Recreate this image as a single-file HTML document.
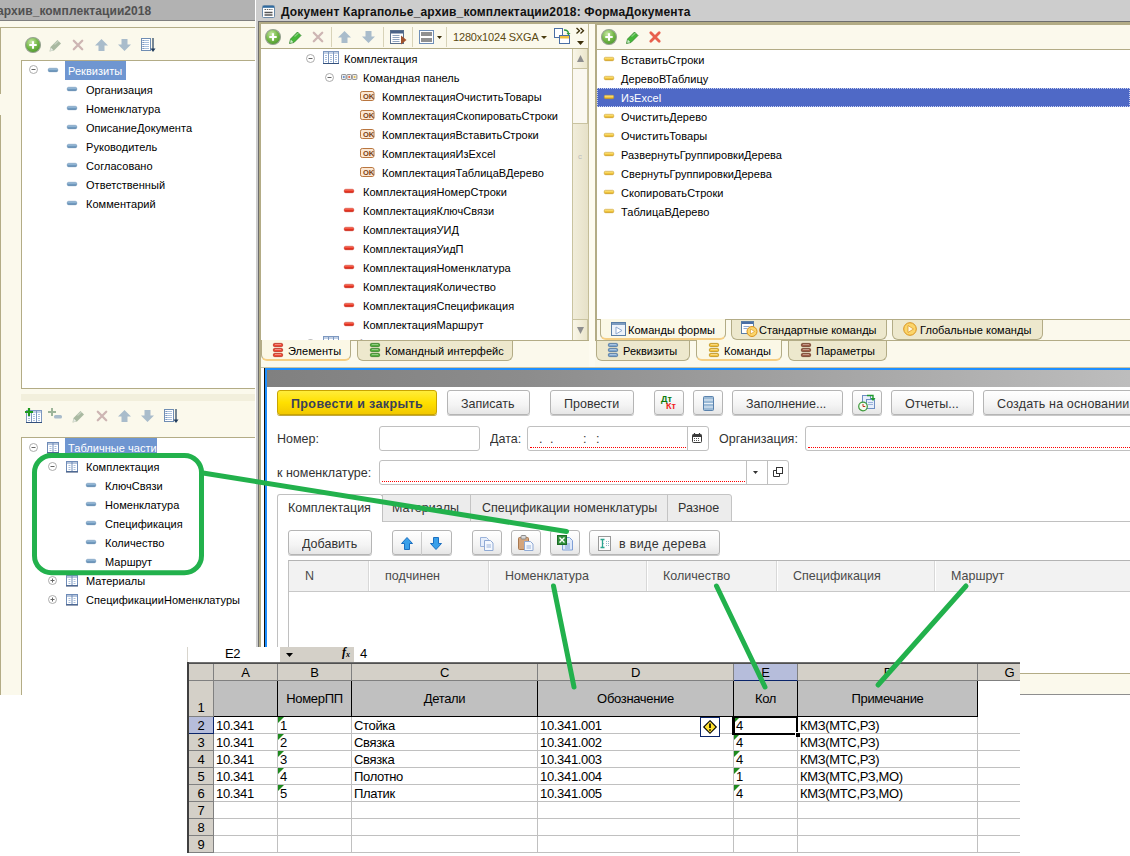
<!DOCTYPE html>
<html lang="ru"><head><meta charset="utf-8"><title>Документ Каргаполье_архив_комплектации2018: ФормаДокумента</title>
<style>
html,body{margin:0;padding:0;background:#fff}
body{width:1130px;height:856px;position:relative;overflow:hidden;font-family:"Liberation Sans",sans-serif;font-size:11px;color:#000}
.a{position:absolute}
.t{position:absolute;white-space:nowrap;line-height:13px;height:13px;font-size:11px;letter-spacing:.04px;margin-top:1px}
.f{position:absolute;white-space:nowrap;line-height:15px;height:15px;font-size:13.3px;color:#333;letter-spacing:0;transform:scaleX(.94);transform-origin:0 0}
.x{position:absolute;white-space:nowrap;line-height:15px;height:15px;font-size:13px;color:#000;letter-spacing:-.33px}
.btn{position:absolute;box-sizing:border-box;border:1px solid #b5b5b5;border-radius:3px;background:linear-gradient(#fff,#f4f4f4 60%,#e6e6e6);box-shadow:0 1px 0 #c9c9c9}
.inp{position:absolute;box-sizing:border-box;border:1px solid #c0c0c0;border-radius:3px;background:#fff}
svg{position:absolute;overflow:visible}
</style></head><body>
<svg width="0" height="0" style="position:absolute"><defs>
<radialGradient id="gp" cx="40%" cy="30%" r="75%"><stop offset="0" stop-color="#c8e8a4"/><stop offset=".55" stop-color="#74b848"/><stop offset="1" stop-color="#4a962c"/></radialGradient>
<linearGradient id="gb" x1="0" y1="0" x2="0" y2="1"><stop offset="0" stop-color="#b9d3e8"/><stop offset=".5" stop-color="#7ea6c9"/><stop offset="1" stop-color="#4d7ba3"/></linearGradient>
<linearGradient id="gr" x1="0" y1="0" x2="0" y2="1"><stop offset="0" stop-color="#ff9a8a"/><stop offset=".5" stop-color="#ef3a26"/><stop offset="1" stop-color="#c81e10"/></linearGradient>
<linearGradient id="gy" x1="0" y1="0" x2="0" y2="1"><stop offset="0" stop-color="#fff0a8"/><stop offset=".5" stop-color="#f7cf48"/><stop offset="1" stop-color="#d9a520"/></linearGradient>
<g id="plus"><circle cx="8" cy="8" r="7.500" fill="url(#gp)" stroke="#98a392" stroke-width="1.100"/><path d="M8 4.300v7.400M4.300 8h7.400" stroke="#fff" stroke-width="2.100" fill="none"/></g>
<g id="exm"><circle cx="4.500" cy="4.500" r="4" fill="#fff" stroke="#a3a3a3" stroke-width=".9"/><path d="M2.500 4.500h4" stroke="#666" stroke-width="1"/></g>
<g id="exp"><circle cx="4.500" cy="4.500" r="4" fill="#fff" stroke="#a3a3a3" stroke-width=".9"/><path d="M2.500 4.500h4M4.500 2.500v4" stroke="#666" stroke-width="1"/></g>
<g id="db"><rect x=".3" y=".3" width="9.400" height="3.400" rx="1.300" fill="url(#gb)" stroke="#5f8ab2" stroke-width=".6"/></g>
<g id="dr"><rect x=".3" y=".3" width="9.400" height="3.400" rx="1.300" fill="url(#gr)" stroke="#cf2a18" stroke-width=".6"/></g>
<g id="dy"><rect x=".3" y=".3" width="9.400" height="3.400" rx="1.100" fill="url(#gy)" stroke="#c9981e" stroke-width=".6"/></g>
<g id="pen"><path d="M.5 12.500L1.500 8 8.500 1 12 4.500 5 11.500z"/><path d="M1.700 8.600L4.400 11.300 1.200 11.900z" fill="#fff" fill-opacity=".75" stroke="none"/><path d="M5.500 5.500L9.500 2" stroke="#fff" stroke-opacity=".35" stroke-width="1.200" fill="none"/></g>
<g id="xx"><path d="M1.800 1.800l8.400 8.400M10.200 1.800l-8.400 8.400" stroke-linecap="round" fill="none"/></g>
<g id="up"><path d="M6.500 0L13 6.500H9.500V12h-6V6.500H0z"/></g>
<g id="dn"><path d="M6.500 12L13 5.500H9.500V0h-6v5.500H0z"/></g>
<g id="lst"><rect x=".5" y=".5" width="9" height="12" fill="#fff" stroke="#6f8db3"/><path d="M2 2.500h6M2 4.500h6M2 6.500h6M2 8.500h6M2 10.500h6" stroke="#a9c0dc" stroke-width="1"/><path d="M1.500 2.500h1M1.500 4.500h1M1.500 6.500h1M1.500 8.500h1M1.500 10.500h1" stroke="#4a6fa5" stroke-width="1"/><path d="M12 0v12" stroke="#1f3b5c" stroke-width="1.2"/><path d="M9.500 10.500h5L12 14z" fill="#1f3b5c"/></g>
<g id="tbl"><rect x=".5" y=".5" width="11" height="10" fill="#fff" stroke="#6f8cb8"/><rect x="1" y="1" width="10" height="2" fill="#b4c4dc"/><path d="M6 1v10" stroke="#6f8cb8"/><path d="M2.500 4.500h2M2.500 6.500h2M2.500 8.500h2M7.500 4.500h2M7.500 6.500h2M7.500 8.500h2" stroke="#a9bfdc"/><path d="M0 11h12" stroke="#2f4670"/></g>
<g id="tbl3"><rect x=".5" y=".5" width="15" height="12" fill="#fff" stroke="#7d98c0"/><rect x="1" y="1" width="14" height="2" fill="#c3d1e6"/><path d="M5.500 1v11M10.500 1v11" stroke="#7d98c0"/><path d="M2 4.500h2M2 6.500h2M2 8.500h2M2 10.500h2M7 4.500h2M7 6.500h2M7 8.500h2M7 10.500h2M12 4.500h2M12 6.500h2M12 8.500h2M12 10.500h2" stroke="#a9bfdc"/><path d="M0 12.500h16" stroke="#33507c"/></g>
<g id="okb"><rect x=".5" y=".5" width="13.500" height="9" rx="1.800" fill="#fbe7d3" stroke="#b9763f"/></g>
<g id="stack"><rect x="0" y="0" width="10" height="3.400" rx="1"/><rect x="0" y="4.300" width="10" height="3.400" rx="1"/><rect x="0" y="8.600" width="10" height="3.400" rx="1"/></g>
</defs></svg>

<div class="a" style="left:0;top:0;width:1130px;height:695px;overflow:hidden;background:#fbf9ec">
<div class="a" style="left:0;top:0;width:255px;height:20px;background:#b2b2b2"></div>
<div class="a" style="left:0;top:20px;width:255px;height:1px;background:#7f7f7f"></div>
<div class="a" style="left:-3px;top:3px;font-weight:bold;font-size:12px;line-height:16px;color:#505050;white-space:nowrap;letter-spacing:.08px">архив_комплектации2018</div>
<div class="a" style="left:0;top:27px;width:255px;height:1px;background:#b3ac86"></div>
<div class="a" style="left:0;top:27px;width:1px;height:67px;background:#b3ac86"></div>
<div class="a" style="left:0;top:115px;width:1px;height:580px;background:#b3ac86"></div>
<svg style="left:25px;top:37px" width="16" height="16"><use href="#plus"/></svg>
<svg style="left:49px;top:39px" width="13" height="13" fill="#a9b9a1"><use href="#pen"/></svg>
<svg style="left:72px;top:39px" width="12" height="12" stroke="#cdb5b3" stroke-width="2.300"><use href="#xx"/></svg>
<svg style="left:95px;top:39px" width="13" height="12" fill="#a9bccb"><use href="#up"/></svg>
<svg style="left:118px;top:39px" width="13" height="12" fill="#a9bccb"><use href="#dn"/></svg>
<svg style="left:141px;top:38px" width="15" height="14"><use href="#lst"/></svg>
<div class="a" style="left:21px;top:60px;width:240px;height:329px;background:#fff;border:1px solid #b3ac86;box-sizing:border-box"></div>
<svg style="left:29px;top:65px" width="10" height="10"><use href="#exm"/></svg>
<svg style="left:48px;top:68px" width="10" height="4"><use href="#db"/></svg>
<div class="a" style="left:65px;top:61px;width:61px;height:19px;background:#6f96d1"></div>
<div class="t" style="left:68px;top:64px;color:#fff">Реквизиты</div>
<svg style="left:67px;top:87px" width="10" height="4"><use href="#db"/></svg>
<div class="t" style="left:86px;top:83px">Организация</div>
<svg style="left:67px;top:106px" width="10" height="4"><use href="#db"/></svg>
<div class="t" style="left:86px;top:102px">Номенклатура</div>
<svg style="left:67px;top:125px" width="10" height="4"><use href="#db"/></svg>
<div class="t" style="left:86px;top:121px">ОписаниеДокумента</div>
<svg style="left:67px;top:144px" width="10" height="4"><use href="#db"/></svg>
<div class="t" style="left:86px;top:140px">Руководитель</div>
<svg style="left:67px;top:163px" width="10" height="4"><use href="#db"/></svg>
<div class="t" style="left:86px;top:159px">Согласовано</div>
<svg style="left:67px;top:182px" width="10" height="4"><use href="#db"/></svg>
<div class="t" style="left:86px;top:178px">Ответственный</div>
<svg style="left:67px;top:201px" width="10" height="4"><use href="#db"/></svg>
<div class="t" style="left:86px;top:197px">Комментарий</div>
<div class="a" style="left:21px;top:394px;width:234px;height:7px;background:#f2efdc"></div>
<svg style="left:26px;top:410px" width="16" height="14"><use href="#tbl3"/></svg>
<svg style="left:25px;top:408px" width="8" height="8"><path d="M4 0v8M0 4h8" stroke="#1f9a1f" stroke-width="2.200"/></svg>
<svg style="left:48px;top:408px" width="14" height="12"><path d="M4 0v8M0 4h8" stroke="#9db59a" stroke-width="2"/><rect x="6" y="7" width="8" height="3.500" rx="1.500" fill="#a9bccb"/></svg>
<svg style="left:72px;top:410px" width="13" height="13" fill="#a9b9a1"><use href="#pen"/></svg>
<svg style="left:96px;top:410px" width="12" height="12" stroke="#cdb5b3" stroke-width="2.300"><use href="#xx"/></svg>
<svg style="left:118px;top:410px" width="13" height="12" fill="#a9bccb"><use href="#up"/></svg>
<svg style="left:141px;top:410px" width="13" height="12" fill="#a9bccb"><use href="#dn"/></svg>
<svg style="left:164px;top:409px" width="15" height="14"><use href="#lst"/></svg>
<div class="a" style="left:21px;top:437px;width:240px;height:270px;background:#fff;border:1px solid #b3ac86;box-sizing:border-box"></div>
<svg style="left:29px;top:443px" width="10" height="10"><use href="#exm"/></svg>
<svg style="left:47px;top:442px" width="12" height="12"><use href="#tbl"/></svg>
<div class="a" style="left:65px;top:438px;width:92px;height:19px;background:#6f96d1"></div>
<div class="t" style="left:68px;top:441px;color:#fff">Табличные части</div>
<svg style="left:48px;top:462px" width="10" height="10"><use href="#exm"/></svg>
<svg style="left:66px;top:461px" width="12" height="12"><use href="#tbl"/></svg>
<div class="t" style="left:86px;top:460px">Комплектация</div>
<svg style="left:86px;top:483px" width="10" height="4"><use href="#db"/></svg>
<div class="t" style="left:105px;top:479px">КлючСвязи</div>
<svg style="left:86px;top:502px" width="10" height="4"><use href="#db"/></svg>
<div class="t" style="left:105px;top:498px">Номенклатура</div>
<svg style="left:86px;top:521px" width="10" height="4"><use href="#db"/></svg>
<div class="t" style="left:105px;top:517px">Спецификация</div>
<svg style="left:86px;top:540px" width="10" height="4"><use href="#db"/></svg>
<div class="t" style="left:105px;top:536px">Количество</div>
<svg style="left:86px;top:559px" width="10" height="4"><use href="#db"/></svg>
<div class="t" style="left:105px;top:555px">Маршрут</div>
<svg style="left:48px;top:576px" width="10" height="10"><use href="#exp"/></svg>
<svg style="left:66px;top:575px" width="12" height="12"><use href="#tbl"/></svg>
<div class="t" style="left:86px;top:574px">Материалы</div>
<svg style="left:48px;top:595px" width="10" height="10"><use href="#exp"/></svg>
<svg style="left:66px;top:594px" width="12" height="12"><use href="#tbl"/></svg>
<div class="t" style="left:86px;top:593px">СпецификацииНоменклатуры</div>
<div class="a" style="left:255px;top:0;width:1px;height:695px;background:#fff"></div>
<div class="a" style="left:256px;top:0;width:2px;height:695px;background:#cdcdcd"></div>
<div class="a" style="left:258px;top:0;width:872px;height:695px;background:#fbf9ec"></div>
<div class="a" style="left:256px;top:0;width:874px;height:21px;background:#cdcdcd"></div>
<div class="a" style="left:258px;top:21px;width:872px;height:674px;border-left:1px solid #6e6e6e;border-top:1px solid #6e6e6e;box-sizing:border-box"></div>
<div class="a" style="left:259px;top:22px;width:871px;height:673px;border-left:2px solid #b3ac86;border-top:2px solid #b3ac86;box-sizing:border-box"></div>
<svg style="left:262px;top:5px" width="13" height="13"><rect x=".5" y=".5" width="12" height="12" rx="1" fill="#fff" stroke="#6a8aa8"/><rect x="1" y="1" width="11" height="1.800" fill="#2f6a9f"/><path d="M2.500 4.500h8" stroke="#666" stroke-dasharray="1.500 .8"/><path d="M2.500 7.500h8M2.500 10h8" stroke="#555" stroke-width="1.300"/></svg>
<div class="a" style="left:281px;top:4px;font-weight:bold;font-size:12px;line-height:16px;color:#111;white-space:nowrap;letter-spacing:.16px">Документ Каргаполье_архив_комплектации2018: ФормаДокумента</div>
<div class="a" style="left:588px;top:24px;width:1px;height:317px;background:#c4bd98"></div>
<div class="a" style="left:589px;top:24px;width:6px;height:343px;background:#fdfbf0"></div>
<svg style="left:265px;top:29px" width="16" height="16"><use href="#plus"/></svg>
<svg style="left:289px;top:31px" width="13" height="13" fill="#46b83a" stroke="#2a7a22" stroke-width=".7"><use href="#pen"/></svg>
<svg style="left:312px;top:31px" width="12" height="12" stroke="#cdb5b3" stroke-width="2.300"><use href="#xx"/></svg>
<div class="a" style="left:331px;top:27px;width:1px;height:20px;background:#d8d3b8"></div>
<svg style="left:338px;top:31px" width="13" height="12" fill="#a9bccb"><use href="#up"/></svg>
<svg style="left:362px;top:31px" width="13" height="12" fill="#a9bccb"><use href="#dn"/></svg>
<div class="a" style="left:383px;top:27px;width:1px;height:20px;background:#d8d3b8"></div>
<svg style="left:390px;top:30px" width="17" height="15"><rect x=".5" y=".5" width="13" height="13" fill="#fff" stroke="#5a6f8c"/><rect x="1" y="1" width="12" height="2.500" fill="#4a6288"/><path d="M2.500 5.500h7M2.500 7.500h7M2.500 9.500h7M2.500 11.500h7" stroke="#8fa3bf"/><path d="M11 5.500l5.500 4.500L11 14.500z" fill="#a0522d"/></svg>
<div class="a" style="left:412px;top:27px;width:1px;height:20px;background:#d8d3b8"></div>
<svg style="left:419px;top:30px" width="15" height="14"><rect x=".5" y=".5" width="14" height="13" fill="#fff" stroke="#6f8fb8"/><rect x="2" y="2" width="11" height="4" fill="#909090"/><rect x="2" y="8" width="11" height="4" fill="#909090"/></svg>
<svg style="left:437px;top:36px" width="5" height="3"><path d="M0 0h5L2.500 3z" fill="#3c2f0a"/></svg>
<div class="a" style="left:446px;top:27px;width:1px;height:20px;background:#d8d3b8"></div>
<div class="t" style="left:453px;top:30px;color:#5b4a12;letter-spacing:-.18px">1280x1024 SXGA</div>
<svg style="left:541px;top:36px" width="6" height="3"><path d="M0 0h6L3 3z" fill="#4b3d10"/></svg>
<svg style="left:554px;top:28px" width="17" height="17"><rect x=".5" y=".5" width="8" height="9" fill="#fff" stroke="#4a6fa5"/><rect x="5.500" y="7.500" width="10" height="8" fill="#fff" stroke="#4a6fa5"/><rect x="6" y="8" width="9" height="2.500" fill="#f0c040"/><path d="M10 2c3 0 4.500 1.500 4.500 4" stroke="#2e9a3e" fill="none" stroke-width="1.300"/><path d="M12.500 5h4l-2 2.500z" fill="#2e9a3e"/></svg>
<svg style="left:576px;top:28px" width="9" height="18"><path d="M.5 0l3 2.800-3 2.800M4.500 0l3 2.800-3 2.800" stroke="#3c2f0a" fill="none" stroke-width="1.300"/><path d="M1 13h7l-3.500 4z" fill="#3c2f0a"/></svg>
<div class="a" style="left:261px;top:48px;width:327px;height:1px;background:#b3ac86"></div>
<div class="a" style="left:261px;top:49px;width:1px;height:291px;background:#fff"></div>
<div class="a" style="left:262px;top:49px;width:310px;height:291px;background:#fff;overflow:hidden">
<svg style="left:44px;top:5px" width="10" height="10"><use href="#exm"/></svg>
<svg style="left:61px;top:2px" width="16" height="14"><use href="#tbl3"/></svg>
<div class="t" style="left:82px;top:3px">Комплектация</div>
<svg style="left:63px;top:24px" width="10" height="10"><use href="#exm"/></svg>
<svg style="left:79px;top:25px" width="17" height="6"><g fill="#ececec" stroke="#8a8a8a" stroke-width=".9"><rect x=".5" y=".5" width="4.600" height="5" rx=".8"/><rect x="5.900" y=".5" width="4.600" height="5" rx=".8"/><rect x="11.300" y=".5" width="4.600" height="5" rx=".8"/></g><rect x="2" y="2.200" width="1.600" height="1.600" fill="#4a7fd0"/><rect x="7.400" y="2.200" width="1.600" height="1.600" fill="#e8502a"/><rect x="12.800" y="2.200" width="1.600" height="1.600" fill="#e8b020"/></svg>
<div class="t" style="left:101px;top:22px">Командная панель</div>
<svg style="left:98px;top:42px" width="14" height="11"><use href="#okb"/></svg>
<div class="a" style="left:101px;top:43.6px;font-size:7.500px;font-weight:bold;line-height:8px;color:#7a4216;letter-spacing:-.2px">OK</div>
<div class="t" style="left:120px;top:41px">КомплектацияОчиститьТовары</div>
<svg style="left:98px;top:61px" width="14" height="11"><use href="#okb"/></svg>
<div class="a" style="left:101px;top:62.6px;font-size:7.500px;font-weight:bold;line-height:8px;color:#7a4216;letter-spacing:-.2px">OK</div>
<div class="t" style="left:120px;top:60px">КомплектацияСкопироватьСтроки</div>
<svg style="left:98px;top:80px" width="14" height="11"><use href="#okb"/></svg>
<div class="a" style="left:101px;top:81.6px;font-size:7.500px;font-weight:bold;line-height:8px;color:#7a4216;letter-spacing:-.2px">OK</div>
<div class="t" style="left:120px;top:79px">КомплектацияВставитьСтроки</div>
<svg style="left:98px;top:99px" width="14" height="11"><use href="#okb"/></svg>
<div class="a" style="left:101px;top:100.6px;font-size:7.500px;font-weight:bold;line-height:8px;color:#7a4216;letter-spacing:-.2px">OK</div>
<div class="t" style="left:120px;top:98px">КомплектацияИзExcel</div>
<svg style="left:98px;top:118px" width="14" height="11"><use href="#okb"/></svg>
<div class="a" style="left:101px;top:119.6px;font-size:7.500px;font-weight:bold;line-height:8px;color:#7a4216;letter-spacing:-.2px">OK</div>
<div class="t" style="left:120px;top:117px">КомплектацияТаблицаВДерево</div>
<svg style="left:82px;top:140px" width="10" height="4"><use href="#dr"/></svg>
<div class="t" style="left:101px;top:136px">КомплектацияНомерСтроки</div>
<svg style="left:82px;top:159px" width="10" height="4"><use href="#dr"/></svg>
<div class="t" style="left:101px;top:155px">КомплектацияКлючСвязи</div>
<svg style="left:82px;top:178px" width="10" height="4"><use href="#dr"/></svg>
<div class="t" style="left:101px;top:174px">КомплектацияУИД</div>
<svg style="left:82px;top:197px" width="10" height="4"><use href="#dr"/></svg>
<div class="t" style="left:101px;top:193px">КомплектацияУидП</div>
<svg style="left:82px;top:216px" width="10" height="4"><use href="#dr"/></svg>
<div class="t" style="left:101px;top:212px">КомплектацияНоменклатура</div>
<svg style="left:82px;top:235px" width="10" height="4"><use href="#dr"/></svg>
<div class="t" style="left:101px;top:231px">КомплектацияКоличество</div>
<svg style="left:82px;top:254px" width="10" height="4"><use href="#dr"/></svg>
<div class="t" style="left:101px;top:250px">КомплектацияСпецификация</div>
<svg style="left:82px;top:273px" width="10" height="4"><use href="#dr"/></svg>
<div class="t" style="left:101px;top:269px">КомплектацияМаршрут</div>
<svg style="left:44px;top:290px" width="10" height="10"><use href="#exp"/></svg>
<svg style="left:61px;top:287px" width="16" height="14"><use href="#tbl3"/></svg>
<div class="t" style="left:82px;top:288px">ТаблицаКомплектацииДерево</div>
</div>
<div class="a" style="left:572px;top:49px;width:16px;height:291px;background:linear-gradient(90deg,#f1edda,#e6e1c8);border-left:1px solid #c9c3a0;box-sizing:border-box"></div>
<div class="a" style="left:572px;top:49px;width:16px;height:20px;background:linear-gradient(90deg,#f9f6e8,#ebe6cc);border:1px solid #c9c3a0;border-top:none;box-sizing:border-box"></div>
<svg style="left:577px;top:55px" width="7" height="7"><path d="M0 7h7L3.500 0z" fill="#8e8e8e"/></svg>
<div class="a" style="left:572px;top:69px;width:16px;height:55px;background:#faf8f0;border:1px solid #c9c3a0;border-top:none;box-sizing:border-box"></div>
<div class="a" style="left:572px;top:319px;width:16px;height:21px;background:linear-gradient(90deg,#f9f6e8,#ebe6cc);border:1px solid #c9c3a0;border-bottom:none;box-sizing:border-box"></div>
<svg style="left:577px;top:327px" width="7" height="7"><path d="M0 0h7L3.500 7z" fill="#8e8e8e"/></svg>
<div class="a" style="left:578px;top:153px;font-size:8px;line-height:8px;color:#bbb">c</div>
<div class="a" style="left:261px;top:340px;width:328px;height:1px;background:#b3ac86"></div>
<div class="a" style="left:595px;top:340px;width:535px;height:1px;background:#b3ac86"></div>
<div class="a" style="left:261px;top:340px;width:90px;height:21px;background:#fbf8e6;border:1px solid #b3ac86;border-top:none;border-bottom:2px solid #f5cf85;border-radius:0 0 6px 6px;box-sizing:border-box"></div>
<svg style="left:273px;top:343px" width="10" height="14"><g fill="#ee4a36" stroke="#b82a1a" stroke-width=".8"><rect x=".4" y=".4" width="9.200" height="3.200" rx="1.200"/><rect x=".4" y="5.400" width="9.200" height="3.200" rx="1.200"/><rect x=".4" y="10.400" width="9.200" height="3.200" rx="1.200"/></g><path d="M2 1.500h6M2 6.500h6M2 11.500h6" stroke="#fff" stroke-opacity=".45" stroke-width=".8"/></svg>
<div class="t" style="left:288px;top:344px">Элементы</div>
<div class="a" style="left:357px;top:341px;width:156px;height:20px;background:#ede8cd;border:1px solid #b3ac86;border-top:none;border-bottom:1px solid #b3ac86;border-radius:0 0 6px 6px;box-sizing:border-box"></div>
<svg style="left:370px;top:343px" width="10" height="14"><g fill="#56b040" stroke="#2f7a22" stroke-width=".8"><rect x=".4" y=".4" width="9.200" height="3.200" rx="1.200"/><rect x=".4" y="5.400" width="9.200" height="3.200" rx="1.200"/><rect x=".4" y="10.400" width="9.200" height="3.200" rx="1.200"/></g><path d="M2 1.500h6M2 6.500h6M2 11.500h6" stroke="#fff" stroke-opacity=".45" stroke-width=".8"/></svg>
<div class="t" style="left:385px;top:344px">Командный интерфейс</div>
<div class="a" style="left:595px;top:24px;width:2px;height:317px;background:#b3ac86"></div>
<svg style="left:601px;top:29px" width="16" height="16"><use href="#plus"/></svg>
<svg style="left:626px;top:31px" width="13" height="13" fill="#46b83a" stroke="#2a7a22" stroke-width=".7"><use href="#pen"/></svg>
<svg style="left:649px;top:31px" width="12" height="12" stroke="#e8604e" stroke-width="2.800"><use href="#xx"/></svg>
<div class="a" style="left:595px;top:24px;width:535px;height:1px;background:#b3ac86"></div>
<div class="a" style="left:597px;top:49px;width:533px;height:1px;background:#b3ac86"></div>
<div class="a" style="left:597px;top:50px;width:533px;height:269px;background:#fff"></div>
<div class="a" style="left:597px;top:88px;width:533px;height:19px;background:#4f69c6;outline:1px dotted #c9d2f2;outline-offset:-1px"></div>
<svg style="left:604px;top:57px" width="10" height="4"><use href="#dy"/></svg>
<div class="t" style="left:621px;top:53px">ВставитьСтроки</div>
<svg style="left:604px;top:76px" width="10" height="4"><use href="#dy"/></svg>
<div class="t" style="left:621px;top:72px">ДеревоВТаблицу</div>
<svg style="left:604px;top:95px" width="10" height="4"><use href="#dy"/></svg>
<div class="t" style="left:621px;top:91px;color:#fff">ИзExcel</div>
<svg style="left:604px;top:114px" width="10" height="4"><use href="#dy"/></svg>
<div class="t" style="left:621px;top:110px">ОчиститьДерево</div>
<svg style="left:604px;top:133px" width="10" height="4"><use href="#dy"/></svg>
<div class="t" style="left:621px;top:129px">ОчиститьТовары</div>
<svg style="left:604px;top:152px" width="10" height="4"><use href="#dy"/></svg>
<div class="t" style="left:621px;top:148px">РазвернутьГруппировкиДерева</div>
<svg style="left:604px;top:171px" width="10" height="4"><use href="#dy"/></svg>
<div class="t" style="left:621px;top:167px">СвернутьГруппировкиДерева</div>
<svg style="left:604px;top:190px" width="10" height="4"><use href="#dy"/></svg>
<div class="t" style="left:621px;top:186px">СкопироватьСтроки</div>
<svg style="left:604px;top:209px" width="10" height="4"><use href="#dy"/></svg>
<div class="t" style="left:621px;top:205px">ТаблицаВДерево</div>
<div class="a" style="left:597px;top:319px;width:533px;height:1px;background:#b3ac86"></div>
<div class="a" style="left:600px;top:319px;width:126px;height:21px;background:#fbf8e6;border:1px solid #b3ac86;border-top:none;border-bottom:2px solid #f5cf85;border-radius:0 0 6px 6px;box-sizing:border-box"></div>
<svg style="left:611px;top:322px" width="15" height="14"><rect x=".5" y=".5" width="14" height="13" fill="#eef3fa" stroke="#5a7ea6"/><rect x="1" y="1" width="13" height="2" fill="#7d9cc0"/><path d="M5 5l6 3.500L5 12z" fill="#fff" stroke="#8fa9cf"/></svg>
<div class="t" style="left:628px;top:323px">Команды формы</div>
<div class="a" style="left:731px;top:320px;width:156px;height:20px;background:#ede8cd;border:1px solid #b3ac86;border-top:none;border-bottom:1px solid #b3ac86;border-radius:0 0 6px 6px;box-sizing:border-box"></div>
<svg style="left:741px;top:321px" width="17" height="16"><rect x=".5" y=".5" width="12" height="12" fill="#fff" stroke="#5a7ea6"/><rect x="1" y="1" width="11" height="2" fill="#4a6fa5"/><path d="M2.500 5.500h6M2.500 7.500h4" stroke="#8fa9cf"/><circle cx="11" cy="10.500" r="5" fill="#fbd56a" stroke="#d9921c"/><path d="M9.500 8l4 2.500-4 2.500z" fill="#fff" stroke="#d9921c" stroke-width=".6"/></svg>
<div class="t" style="left:759px;top:323px">Стандартные команды</div>
<div class="a" style="left:892px;top:320px;width:151px;height:20px;background:#ede8cd;border:1px solid #b3ac86;border-top:none;border-bottom:1px solid #b3ac86;border-radius:0 0 6px 6px;box-sizing:border-box"></div>
<svg style="left:903px;top:322px" width="14" height="14"><circle cx="7" cy="7" r="6.300" fill="#fbd56a" stroke="#d9921c"/><path d="M5 3.500l5.500 3.500L5 10.500z" fill="#fff8e0" stroke="#d9921c" stroke-width=".7"/></svg>
<div class="t" style="left:920px;top:323px">Глобальные команды</div>
<div class="a" style="left:596px;top:341px;width:94px;height:20px;background:#ede8cd;border:1px solid #b3ac86;border-top:none;border-bottom:1px solid #b3ac86;border-radius:0 0 6px 6px;box-sizing:border-box"></div>
<svg style="left:608px;top:343px" width="10" height="14"><g fill="#7fa6cf" stroke="#456f9c" stroke-width=".8"><rect x=".4" y=".4" width="9.200" height="3.200" rx="1.200"/><rect x=".4" y="5.400" width="9.200" height="3.200" rx="1.200"/><rect x=".4" y="10.400" width="9.200" height="3.200" rx="1.200"/></g><path d="M2 1.500h6M2 6.500h6M2 11.500h6" stroke="#fff" stroke-opacity=".45" stroke-width=".8"/></svg>
<div class="t" style="left:623px;top:344px">Реквизиты</div>
<div class="a" style="left:696px;top:340px;width:86px;height:21px;background:#fbf8e6;border:1px solid #b3ac86;border-top:none;border-bottom:2px solid #f5cf85;border-radius:0 0 6px 6px;box-sizing:border-box"></div>
<svg style="left:709px;top:343px" width="10" height="14"><g fill="#f4c440" stroke="#b88a10" stroke-width=".8"><rect x=".4" y=".4" width="9.200" height="3.200" rx="1.200"/><rect x=".4" y="5.400" width="9.200" height="3.200" rx="1.200"/><rect x=".4" y="10.400" width="9.200" height="3.200" rx="1.200"/></g><path d="M2 1.500h6M2 6.500h6M2 11.500h6" stroke="#fff" stroke-opacity=".45" stroke-width=".8"/></svg>
<div class="t" style="left:724px;top:344px">Команды</div>
<div class="a" style="left:788px;top:341px;width:99px;height:20px;background:#ede8cd;border:1px solid #b3ac86;border-top:none;border-bottom:1px solid #b3ac86;border-radius:0 0 6px 6px;box-sizing:border-box"></div>
<svg style="left:801px;top:343px" width="10" height="14"><g fill="#a0604a" stroke="#6a3624" stroke-width=".8"><rect x=".4" y=".4" width="9.200" height="3.200" rx="1.200"/><rect x=".4" y="5.400" width="9.200" height="3.200" rx="1.200"/><rect x=".4" y="10.400" width="9.200" height="3.200" rx="1.200"/></g><path d="M2 1.500h6M2 6.500h6M2 11.500h6" stroke="#fff" stroke-opacity=".45" stroke-width=".8"/></svg>
<div class="t" style="left:816px;top:344px">Параметры</div>
<div class="a" style="left:261px;top:367px;width:869px;height:1px;background:#c9c4a4"></div>
<div class="a" style="left:261px;top:368px;width:869px;height:305px;background:#fff"></div>
<div class="a" style="left:264px;top:368px;width:1px;height:305px;background:#111"></div>
<div class="a" style="left:265px;top:368px;width:865px;height:305px;background:#fff;border-left:2px solid #1e8fff;border-top:2px solid #1e8fff;box-sizing:border-box"></div>
<div class="a" style="left:267px;top:370px;width:863px;height:17px;background:linear-gradient(90deg,#808080,#8c8c8c 30%,#a8a8a8 70%,#bdbdbd)"></div>
<div class="a" style="left:261px;top:673px;width:869px;height:22px;background:#fbf9ec;border-top:1px solid #b3ac86;border-bottom:1px solid #8e8e8e;box-sizing:border-box"></div>
<div class="a" style="left:277px;top:390px;width:160px;height:25px;box-sizing:border-box;border:1px solid #c9a500;border-radius:3px;background:linear-gradient(#ffec3a,#ffe000 50%,#f2c800);box-shadow:0 1px 0 #bfa640"></div>
<div class="f" style="left:291px;top:396px;font-weight:bold;color:#39405a;letter-spacing:.4px">Провести и закрыть</div>
<div class="btn" style="left:447px;top:390px;width:83px;height:25px;"></div>
<div class="f" style="left:461px;top:396px;">Записать</div>
<div class="btn" style="left:550px;top:390px;width:84px;height:25px;"></div>
<div class="f" style="left:564px;top:396px;">Провести</div>
<div class="btn" style="left:654px;top:390px;width:30px;height:25px;"></div>
<div class="a" style="left:661px;top:394px;font:bold 9px/10px 'Liberation Sans',sans-serif;color:#0a7a0a">Дт</div>
<div class="a" style="left:666px;top:401px;font:bold 9px/10px 'Liberation Sans',sans-serif;color:#f02020">Кт</div>
<div class="btn" style="left:693px;top:390px;width:30px;height:25px;"></div>
<svg style="left:703px;top:396px" width="11" height="15"><rect x=".5" y=".5" width="10" height="14" rx="1" fill="#9bbad6" stroke="#5a82ad"/><path d="M1 4h9M1 7.500h9M1 11h9" stroke="#e8f0f8"/></svg>
<div class="btn" style="left:732px;top:390px;width:111px;height:25px;"></div>
<div class="f" style="left:746px;top:396px;">Заполнение...</div>
<div class="btn" style="left:852px;top:390px;width:30px;height:25px;"></div>
<svg style="left:858px;top:394px" width="18" height="18"><rect x="4.500" y="1.500" width="8" height="9" fill="#e6eefb" stroke="#6f8fc4"/><rect x="8.500" y="5.500" width="8" height="9" fill="#e6eefb" stroke="#6f8fc4"/><path d="M10 8.500h5M10 10.500h5" stroke="#9bb3da"/><path d="M9 1.500h6v3" fill="none" stroke="#1f9a2f" stroke-width="1.400"/><path d="M12.500 4h5l-2.500 3z" fill="#1f9a2f"/><circle cx="5" cy="12.500" r="4.300" fill="#f4fbf0" stroke="#3d9a3a" stroke-width="1.200"/><path d="M5 10v2.500h2.300" stroke="#c03020" fill="none"/></svg>
<div class="btn" style="left:891px;top:390px;width:83px;height:25px;"></div>
<div class="f" style="left:905px;top:396px;">Отчеты...</div>
<div class="btn" style="left:983px;top:390px;width:170px;height:25px;"></div>
<div class="f" style="left:997px;top:396px;letter-spacing:.15px">Создать на основании</div>
<div class="f" style="left:277px;top:431px;">Номер:</div>
<div class="inp" style="left:379px;top:426px;width:101px;height:25px"></div>
<div class="f" style="left:490px;top:431px;">Дата:</div>
<div class="inp" style="left:527px;top:426px;width:182px;height:25px"></div>
<div class="a" style="left:687px;top:427px;width:1px;height:23px;background:#c0c0c0"></div>
<div class="a" style="left:530px;top:447px;width:156px;height:0;border-top:1px dotted #f00"></div>
<div class="f" style="left:539px;top:431px;">.</div>
<div class="f" style="left:550px;top:431px;">.</div>
<div class="f" style="left:583px;top:431px;">:</div>
<div class="f" style="left:596px;top:431px;">:</div>
<svg style="left:692px;top:433px" width="10" height="11"><rect x=".5" y="1.500" width="9" height="8" rx="1" fill="#fff" stroke="#3a3a3a"/><rect x=".5" y="1.500" width="9" height="2.500" fill="#3a3a3a"/><path d="M2.500 0v2M7.500 0v2" stroke="#3a3a3a" stroke-width="1.200"/><path d="M2 5.500h6M2 7.500h6" stroke="#555" stroke-dasharray="1 1"/></svg>
<div class="f" style="left:719px;top:431px;">Организация:</div>
<div class="inp" style="left:805px;top:426px;width:340px;height:25px"></div>
<div class="a" style="left:808px;top:447px;width:330px;height:0;border-top:1px dotted #f00"></div>
<div class="f" style="left:277px;top:465px;">к номенклатуре:</div>
<div class="inp" style="left:379px;top:460px;width:410px;height:25px"></div>
<div class="a" style="left:746px;top:461px;width:1px;height:23px;background:#c0c0c0"></div>
<div class="a" style="left:767px;top:461px;width:1px;height:23px;background:#c0c0c0"></div>
<div class="a" style="left:382px;top:481px;width:363px;height:0;border-top:1px dotted #f00"></div>
<svg style="left:753px;top:471px" width="5" height="3"><path d="M0 0h5L2.500 3z" fill="#333"/></svg>
<svg style="left:773px;top:467px" width="11" height="11"><rect x="3.500" y=".5" width="6" height="6" fill="#fff" stroke="#333"/><path d="M3.500 3.500H.5v6h6v-3" fill="none" stroke="#333"/></svg>
<div class="a" style="left:277px;top:521px;width:860px;height:152px;border-top:1px solid #c0c0c0;border-left:1px solid #c0c0c0;box-sizing:border-box"></div>
<div class="a" style="left:382px;top:494px;width:350px;height:28px;background:#ececec;border:1px solid #c4c4c4;border-radius:0 3px 0 0;box-sizing:border-box"></div>
<div class="a" style="left:470px;top:495px;width:1px;height:26px;background:#c4c4c4"></div>
<div class="a" style="left:667px;top:495px;width:1px;height:26px;background:#c4c4c4"></div>
<div class="a" style="left:277px;top:494px;width:106px;height:28px;background:#fff;border:1px solid #c0c0c0;border-bottom:none;border-radius:3px 3px 0 0;box-sizing:border-box"></div>
<div class="f" style="left:288px;top:500px;">Комплектация</div>
<div class="f" style="left:392px;top:500px;">Материалы</div>
<div class="f" style="left:482px;top:500px;">Спецификации номенклатуры</div>
<div class="f" style="left:678px;top:500px;">Разное</div>
<div class="btn" style="left:288px;top:530px;width:84px;height:25px;"></div>
<div class="f" style="left:302px;top:536px;">Добавить</div>
<div class="btn" style="left:392px;top:530px;width:60px;height:25px;"></div>
<div class="a" style="left:421px;top:532px;width:1px;height:23px;background:#c9c9c9"></div>
<svg style="left:401px;top:537px" width="12" height="13"><path d="M6 .5L11.500 6.500H8.500V12.500h-5V6.500H.5z" fill="#39a0ea" stroke="#1b6fc0"/></svg>
<svg style="left:430px;top:537px" width="12" height="13"><path d="M6 12.500L11.500 6.500H8.500V.5h-5V6.500H.5z" fill="#39a0ea" stroke="#1b6fc0"/></svg>
<div class="btn" style="left:472px;top:530px;width:30px;height:25px;"></div>
<svg style="left:480px;top:537px" width="14" height="14"><path d="M.5 .5h6l2 2v7h-8z" fill="#e6eefb" stroke="#9bb3da"/><path d="M4.500 3.500h6l2.500 2.500v7.500h-8.500z" fill="#f4f8fe" stroke="#8fa9d4"/><path d="M6.500 8h4.500M6.500 10h4.500" stroke="#9bb3da"/></svg>
<div class="btn" style="left:511px;top:530px;width:30px;height:25px;"></div>
<svg style="left:518px;top:535px" width="16" height="16"><rect x=".5" y="2.500" width="10" height="12" rx="1" fill="#d4a57c" stroke="#a87850"/><rect x="3" y=".5" width="5" height="3.500" rx="1" fill="#d9d9d9" stroke="#8c8c8c"/><path d="M6.500 6.500h6l2.500 2.500v6.500h-8.500z" fill="#f4f8fe" stroke="#8fa9d4"/><path d="M8.500 11h4.500M8.500 13h4.500" stroke="#9bb3da"/></svg>
<div class="btn" style="left:550px;top:530px;width:30px;height:25px;"></div>
<svg style="left:557px;top:535px" width="17" height="16"><path d="M5.500 2.500h7l3 3v9.500h-10z" fill="#dfe9fa" stroke="#7f9fd6"/><path d="M8 9h5M8 11h5M8 13h5" stroke="#7f9fd6"/><rect x=".5" y=".5" width="9" height="9" fill="#2f8f3a" stroke="#1c6a26"/><path d="M2.500 2.500l5 5M7.500 2.500l-5 5" stroke="#fff" stroke-width="1.400"/></svg>
<div class="btn" style="left:589px;top:530px;width:131px;height:25px;"></div>
<svg style="left:598px;top:536px" width="13" height="15"><rect x=".5" y=".5" width="12" height="14" fill="#fdfdfd" stroke="#9a9a9a"/><path d="M4.500 3v9M2.500 3.500h4M2.500 11.500h4" stroke="#2aa58f" stroke-width="1.300" fill="none"/><path d="M5 7.500h2M8 5.500h3M8 7.500h3M8 9.500h3" stroke="#8fb8c8" stroke-width="1" stroke-dasharray="1 1" fill="none"/></svg>
<div class="f" style="left:619px;top:536px;;letter-spacing:.35px">в виде дерева</div>
<div class="a" style="left:288px;top:560px;width:850px;height:113px;border-top:1px solid #b4b4b4;border-left:1px solid #c0c0c0;box-sizing:border-box;background:#fff"></div>
<div class="a" style="left:289px;top:561px;width:850px;height:30px;background:#f2f2f2;border-bottom:1px solid #c8c8c8"></div>
<div class="a" style="left:368px;top:561px;width:1px;height:30px;background:#d8d8d8"></div>
<div class="a" style="left:369px;top:561px;width:1px;height:30px;background:#fff"></div>
<div class="a" style="left:488px;top:561px;width:1px;height:30px;background:#d8d8d8"></div>
<div class="a" style="left:489px;top:561px;width:1px;height:30px;background:#fff"></div>
<div class="a" style="left:646px;top:561px;width:1px;height:30px;background:#d8d8d8"></div>
<div class="a" style="left:647px;top:561px;width:1px;height:30px;background:#fff"></div>
<div class="a" style="left:776px;top:561px;width:1px;height:30px;background:#d8d8d8"></div>
<div class="a" style="left:777px;top:561px;width:1px;height:30px;background:#fff"></div>
<div class="a" style="left:934px;top:561px;width:1px;height:30px;background:#d8d8d8"></div>
<div class="a" style="left:935px;top:561px;width:1px;height:30px;background:#fff"></div>
<div class="f" style="left:305px;top:568px;color:#4a4a4a">N</div>
<div class="f" style="left:385px;top:568px;color:#4a4a4a">подчинен</div>
<div class="f" style="left:505px;top:568px;color:#4a4a4a">Номенклатура</div>
<div class="f" style="left:663px;top:568px;color:#4a4a4a">Количество</div>
<div class="f" style="left:793px;top:568px;color:#4a4a4a">Спецификация</div>
<div class="f" style="left:951px;top:568px;color:#4a4a4a">Маршрут</div>
</div>
<div class="a" style="left:187px;top:647px;width:833px;height:206px;background:#fff;overflow:hidden">
<div class="a" style="left:93px;top:0;width:74px;height:15px;background:#d4d0c8"></div>
<div class="a" style="left:0;top:0;width:1px;height:15px;background:#d8d5cd"></div>
<div class="x" style="left:38px;top:-1px">E2</div>
<svg style="left:99px;top:6px" width="7" height="4"><path d="M0 0h7L3.500 4z" fill="#000"/></svg>
<div class="a" style="left:155px;top:-2px;font:italic bold 12px/15px 'Liberation Serif',serif;color:#000">f</div><div class="a" style="left:159px;top:3px;font:italic bold 8px/10px 'Liberation Serif',serif;color:#000">x</div>
<div class="x" style="left:173px;top:-1px">4</div>
<div class="a" style="left:0;top:15px;width:833px;height:2px;background:linear-gradient(#808080,#404040)"></div>
<div class="a" style="left:0;top:15px;width:2px;height:191px;background:#404040"></div>
<div class="a" style="left:2px;top:17px;width:831px;height:17px;background:#d4d0c8;border-bottom:1px solid #808080;box-sizing:border-box"></div>
<div class="a" style="left:2px;top:17px;width:25px;height:17px;box-sizing:border-box;border-right:1px solid #808080;"></div>
<div class="a" style="left:27px;top:17px;width:64px;height:17px;box-sizing:border-box;border-right:1px solid #808080;"></div>
<div class="x" style="left:27px;top:18px;width:63px;text-align:center">A</div>
<div class="a" style="left:91px;top:17px;width:74px;height:17px;box-sizing:border-box;border-right:1px solid #808080;"></div>
<div class="x" style="left:91px;top:18px;width:73px;text-align:center">B</div>
<div class="a" style="left:165px;top:17px;width:186px;height:17px;box-sizing:border-box;border-right:1px solid #808080;"></div>
<div class="x" style="left:165px;top:18px;width:185px;text-align:center">C</div>
<div class="a" style="left:351px;top:17px;width:196px;height:17px;box-sizing:border-box;border-right:1px solid #808080;"></div>
<div class="x" style="left:351px;top:18px;width:195px;text-align:center">D</div>
<div class="a" style="left:547px;top:17px;width:64px;height:17px;box-sizing:border-box;border-right:1px solid #808080;background:#b6bddb;border-bottom:1px solid #0a246a;"></div>
<div class="x" style="left:547px;top:18px;width:63px;text-align:center">E</div>
<div class="a" style="left:611px;top:17px;width:180px;height:17px;box-sizing:border-box;border-right:1px solid #808080;"></div>
<div class="x" style="left:611px;top:18px;width:179px;text-align:center">F</div>
<div class="a" style="left:791px;top:17px;width:64px;height:17px;box-sizing:border-box;border-right:1px solid #808080;"></div>
<div class="x" style="left:791px;top:18px;width:63px;text-align:center">G</div>
<div class="a" style="left:2px;top:34px;width:25px;height:172px;background:#d4d0c8;border-right:1px solid #808080;box-sizing:border-box"></div>
<div class="a" style="left:27px;top:34px;width:764px;height:36px;background:#c0c0c0;border-bottom:1px solid #000;border-right:1px solid #000;box-sizing:border-box"></div>
<div class="a" style="left:90px;top:34px;width:1px;height:36px;background:#000"></div>
<div class="a" style="left:164px;top:34px;width:1px;height:36px;background:#000"></div>
<div class="a" style="left:350px;top:34px;width:1px;height:36px;background:#000"></div>
<div class="a" style="left:546px;top:34px;width:1px;height:36px;background:#000"></div>
<div class="a" style="left:610px;top:34px;width:1px;height:36px;background:#000"></div>
<div class="a" style="left:2px;top:69px;width:25px;height:1px;background:#808080"></div>
<div class="x" style="left:2px;top:53px;width:24px;text-align:center">1</div>
<div class="x" style="left:91px;top:44px;width:73px;text-align:center">НомерПП</div>
<div class="x" style="left:165px;top:44px;width:185px;text-align:center">Детали</div>
<div class="x" style="left:351px;top:44px;width:195px;text-align:center">Обозначение</div>
<div class="x" style="left:547px;top:44px;width:63px;text-align:center">Кол</div>
<div class="x" style="left:611px;top:44px;width:179px;text-align:center">Примечание</div>
<div class="a" style="left:90px;top:70px;width:1px;height:136px;background:#c0c0c0"></div>
<div class="a" style="left:164px;top:70px;width:1px;height:136px;background:#c0c0c0"></div>
<div class="a" style="left:350px;top:70px;width:1px;height:136px;background:#c0c0c0"></div>
<div class="a" style="left:546px;top:70px;width:1px;height:136px;background:#c0c0c0"></div>
<div class="a" style="left:610px;top:70px;width:1px;height:136px;background:#c0c0c0"></div>
<div class="a" style="left:790px;top:70px;width:1px;height:136px;background:#c0c0c0"></div>
<div class="a" style="left:27px;top:86px;width:806px;height:1px;background:#c0c0c0"></div>
<div class="a" style="left:2px;top:86px;width:24px;height:1px;background:#808080"></div>
<div class="a" style="left:2px;top:70px;width:25px;height:17px;background:#b6bddb;border-right:1px solid #0a246a;border-bottom:1px solid #0a246a;box-sizing:border-box"></div>
<div class="x" style="left:2px;top:71px;width:24px;text-align:center">2</div>
<div class="x" style="left:29px;top:71px">10.341</div>
<div class="x" style="left:93px;top:71px">1</div>
<div class="x" style="left:167px;top:71px">Стойка</div>
<div class="x" style="left:353px;top:71px">10.341.001</div>
<div class="x" style="left:549px;top:71px">4</div>
<div class="x" style="left:613px;top:71px">КМЗ(МТС,РЗ)</div>
<svg style="left:91px;top:70px" width="6" height="6"><path d="M0 0h6L0 6z" fill="#1e8a1e"/></svg>
<svg style="left:547px;top:70px" width="6" height="6"><path d="M0 0h6L0 6z" fill="#1e8a1e"/></svg>
<div class="a" style="left:27px;top:103px;width:806px;height:1px;background:#c0c0c0"></div>
<div class="a" style="left:2px;top:103px;width:24px;height:1px;background:#808080"></div>
<div class="x" style="left:2px;top:88px;width:24px;text-align:center">3</div>
<div class="x" style="left:29px;top:88px">10.341</div>
<div class="x" style="left:93px;top:88px">2</div>
<div class="x" style="left:167px;top:88px">Связка</div>
<div class="x" style="left:353px;top:88px">10.341.002</div>
<div class="x" style="left:549px;top:88px">4</div>
<div class="x" style="left:613px;top:88px">КМЗ(МТС,РЗ)</div>
<svg style="left:91px;top:87px" width="6" height="6"><path d="M0 0h6L0 6z" fill="#1e8a1e"/></svg>
<svg style="left:547px;top:87px" width="6" height="6"><path d="M0 0h6L0 6z" fill="#1e8a1e"/></svg>
<div class="a" style="left:27px;top:120px;width:806px;height:1px;background:#c0c0c0"></div>
<div class="a" style="left:2px;top:120px;width:24px;height:1px;background:#808080"></div>
<div class="x" style="left:2px;top:105px;width:24px;text-align:center">4</div>
<div class="x" style="left:29px;top:105px">10.341</div>
<div class="x" style="left:93px;top:105px">3</div>
<div class="x" style="left:167px;top:105px">Связка</div>
<div class="x" style="left:353px;top:105px">10.341.003</div>
<div class="x" style="left:549px;top:105px">4</div>
<div class="x" style="left:613px;top:105px">КМЗ(МТС,РЗ)</div>
<svg style="left:91px;top:104px" width="6" height="6"><path d="M0 0h6L0 6z" fill="#1e8a1e"/></svg>
<svg style="left:547px;top:104px" width="6" height="6"><path d="M0 0h6L0 6z" fill="#1e8a1e"/></svg>
<div class="a" style="left:27px;top:137px;width:806px;height:1px;background:#c0c0c0"></div>
<div class="a" style="left:2px;top:137px;width:24px;height:1px;background:#808080"></div>
<div class="x" style="left:2px;top:122px;width:24px;text-align:center">5</div>
<div class="x" style="left:29px;top:122px">10.341</div>
<div class="x" style="left:93px;top:122px">4</div>
<div class="x" style="left:167px;top:122px">Полотно</div>
<div class="x" style="left:353px;top:122px">10.341.004</div>
<div class="x" style="left:549px;top:122px">1</div>
<div class="x" style="left:613px;top:122px">КМЗ(МТС,РЗ,МО)</div>
<svg style="left:91px;top:121px" width="6" height="6"><path d="M0 0h6L0 6z" fill="#1e8a1e"/></svg>
<svg style="left:547px;top:121px" width="6" height="6"><path d="M0 0h6L0 6z" fill="#1e8a1e"/></svg>
<div class="a" style="left:27px;top:154px;width:806px;height:1px;background:#c0c0c0"></div>
<div class="a" style="left:2px;top:154px;width:24px;height:1px;background:#808080"></div>
<div class="x" style="left:2px;top:139px;width:24px;text-align:center">6</div>
<div class="x" style="left:29px;top:139px">10.341</div>
<div class="x" style="left:93px;top:139px">5</div>
<div class="x" style="left:167px;top:139px">Платик</div>
<div class="x" style="left:353px;top:139px">10.341.005</div>
<div class="x" style="left:549px;top:139px">4</div>
<div class="x" style="left:613px;top:139px">КМЗ(МТС,РЗ,МО)</div>
<svg style="left:91px;top:138px" width="6" height="6"><path d="M0 0h6L0 6z" fill="#1e8a1e"/></svg>
<svg style="left:547px;top:138px" width="6" height="6"><path d="M0 0h6L0 6z" fill="#1e8a1e"/></svg>
<div class="a" style="left:27px;top:171px;width:806px;height:1px;background:#c0c0c0"></div>
<div class="a" style="left:2px;top:171px;width:24px;height:1px;background:#808080"></div>
<div class="x" style="left:2px;top:156px;width:24px;text-align:center">7</div>
<div class="a" style="left:27px;top:188px;width:806px;height:1px;background:#c0c0c0"></div>
<div class="a" style="left:2px;top:188px;width:24px;height:1px;background:#808080"></div>
<div class="x" style="left:2px;top:173px;width:24px;text-align:center">8</div>
<div class="a" style="left:27px;top:205px;width:806px;height:1px;background:#c0c0c0"></div>
<div class="a" style="left:2px;top:205px;width:24px;height:1px;background:#808080"></div>
<div class="x" style="left:2px;top:190px;width:24px;text-align:center">9</div>
<div class="a" style="left:545px;top:69px;width:66px;height:19px;border:2px solid #000;border-left-width:3px;box-sizing:border-box"></div>
<div class="a" style="left:608px;top:85px;width:5px;height:5px;background:#000;border:1px solid #fff;border-right:none;border-bottom:none;box-sizing:border-box"></div>
<div class="a" style="left:513px;top:70px;width:20px;height:20px;background:#fff;border:1px solid #0a246a;box-sizing:border-box"></div>
<svg style="left:516px;top:73px" width="14" height="14"><path d="M7 .7L13.300 7 7 13.300.7 7z" fill="#ffe030" stroke="#000" stroke-width="1.100"/><path d="M7 3.500v4.500M7 9.300v1.500" stroke="#000" stroke-width="1.600"/></svg>
</div>
<svg style="left:0;top:0" width="1130" height="856" fill="none" stroke="#22b14c" stroke-width="5" stroke-linecap="round">
<rect x="34.500" y="455.500" width="167" height="117.200" rx="17" ry="17"/>
<path d="M203 473L566.500 531.500"/>
<path d="M553.500 586L574 687"/>
<path d="M716.500 586L765 687"/>
<path d="M966 586L878 685"/>
</svg>
</body></html>
